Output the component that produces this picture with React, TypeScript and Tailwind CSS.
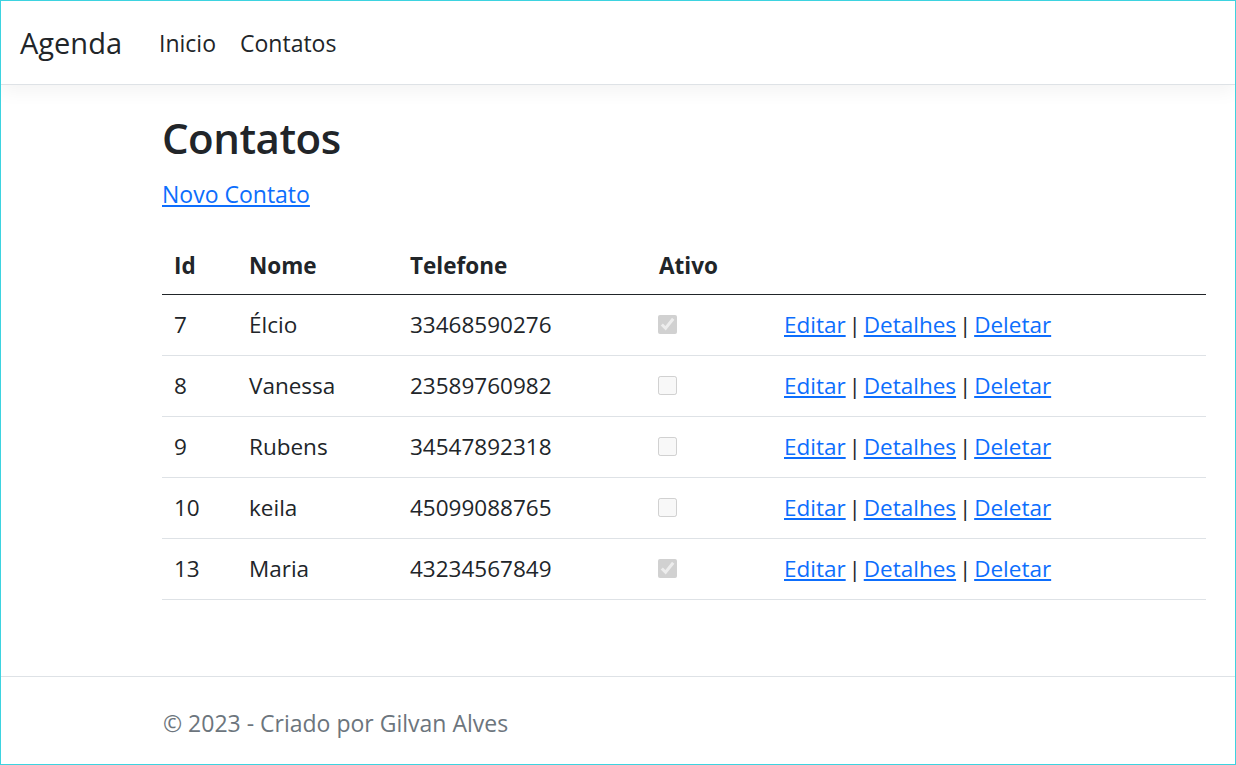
const contatos = [
  { id: 7, nome: 'Élcio', telefone: '33468590276', ativo: true },
  { id: 8, nome: 'Vanessa', telefone: '23589760982', ativo: false },
  { id: 9, nome: 'Rubens', telefone: '34547892318', ativo: false },
  { id: 10, nome: 'keila', telefone: '45099088765', ativo: false },
  { id: 13, nome: 'Maria', telefone: '43234567849', ativo: true },
];

export default function App() {
  return (
    <div className="h-[765px] border border-[#3dd3e0] flex flex-col bg-white text-[#212529] font-['Segoe_UI','Open_Sans',sans-serif] overflow-hidden">
      {/* Navbar */}
      <header className="h-[84px] shrink-0 flex items-center pl-[19px] border-b border-[#dee2e6] shadow-[0_6px_18px_rgba(0,0,0,0.05)] relative z-10">
        <span className="text-[29px] leading-[42px] mr-[25px]">Agenda</span>
        <nav className="flex items-center">
          <a href="#" className="px-[12px] text-[23px] leading-[36px]">Inicio</a>
          <a href="#" className="px-[12px] text-[23px] leading-[36px]">Contatos</a>
        </nav>
      </header>

      {/* Conteúdo */}
      <main className="flex-1 pl-[161px] pr-[29px] pt-[23px]">
        <h1 className="text-[42px] leading-[60px] font-semibold tracking-[-0.5px] mb-[8px]">Contatos</h1>
        <p className="text-[23px] leading-[36px] mb-[24px]">
          <a href="#" className="text-[#0d6efd] underline">Novo Contato</a>
        </p>
        <table className="w-full border-collapse text-[22.5px] leading-[36px]">
          <thead>
            <tr className="border-b border-[#212529]">
              <th className="w-[75px] px-[12px] pt-[12px] pb-[10px] text-left font-bold">Id</th>
              <th className="w-[161px] px-[12px] pt-[12px] pb-[10px] text-left font-bold">Nome</th>
              <th className="w-[249px] px-[12px] pt-[12px] pb-[10px] text-left font-bold">Telefone</th>
              <th className="w-[125px] px-[12px] pt-[12px] pb-[10px] text-left font-bold">Ativo</th>
              <th className="px-[12px] pt-[12px] pb-[10px]"></th>
            </tr>
          </thead>
          <tbody>
            {contatos.map((c) => (
              <tr key={c.id} className="border-b border-[#dee2e6]">
                <td className="p-[12px]">{c.id}</td>
                <td className="p-[12px]">{c.nome}</td>
                <td className="p-[12px]">{c.telefone}</td>
                <td className="p-[12px]">
                  <div className="h-[36px] flex items-center">
                    <input type="checkbox" disabled checked={c.ativo} readOnly className="w-[19px] h-[19px] m-0 -translate-x-px -translate-y-px" />
                  </div>
                </td>
                <td className="p-[12px] [word-spacing:-3px]">
                  <a href="#" className="text-[#0d6efd] underline [word-spacing:0]">Editar</a> |{' '}
                  <a href="#" className="text-[#0d6efd] underline [word-spacing:0]">Detalhes</a> |{' '}
                  <a href="#" className="text-[#0d6efd] underline [word-spacing:0]">Deletar</a>
                </td>
              </tr>
            ))}
          </tbody>
        </table>
      </main>

      {/* Rodapé */}
      <footer className="h-[88px] shrink-0 border-t border-[#dee2e6] pl-[162px] text-[#6c757d] text-[23px] leading-[92px]">
        © 2023 - Criado por Gilvan Alves
      </footer>
    </div>
  );
}
